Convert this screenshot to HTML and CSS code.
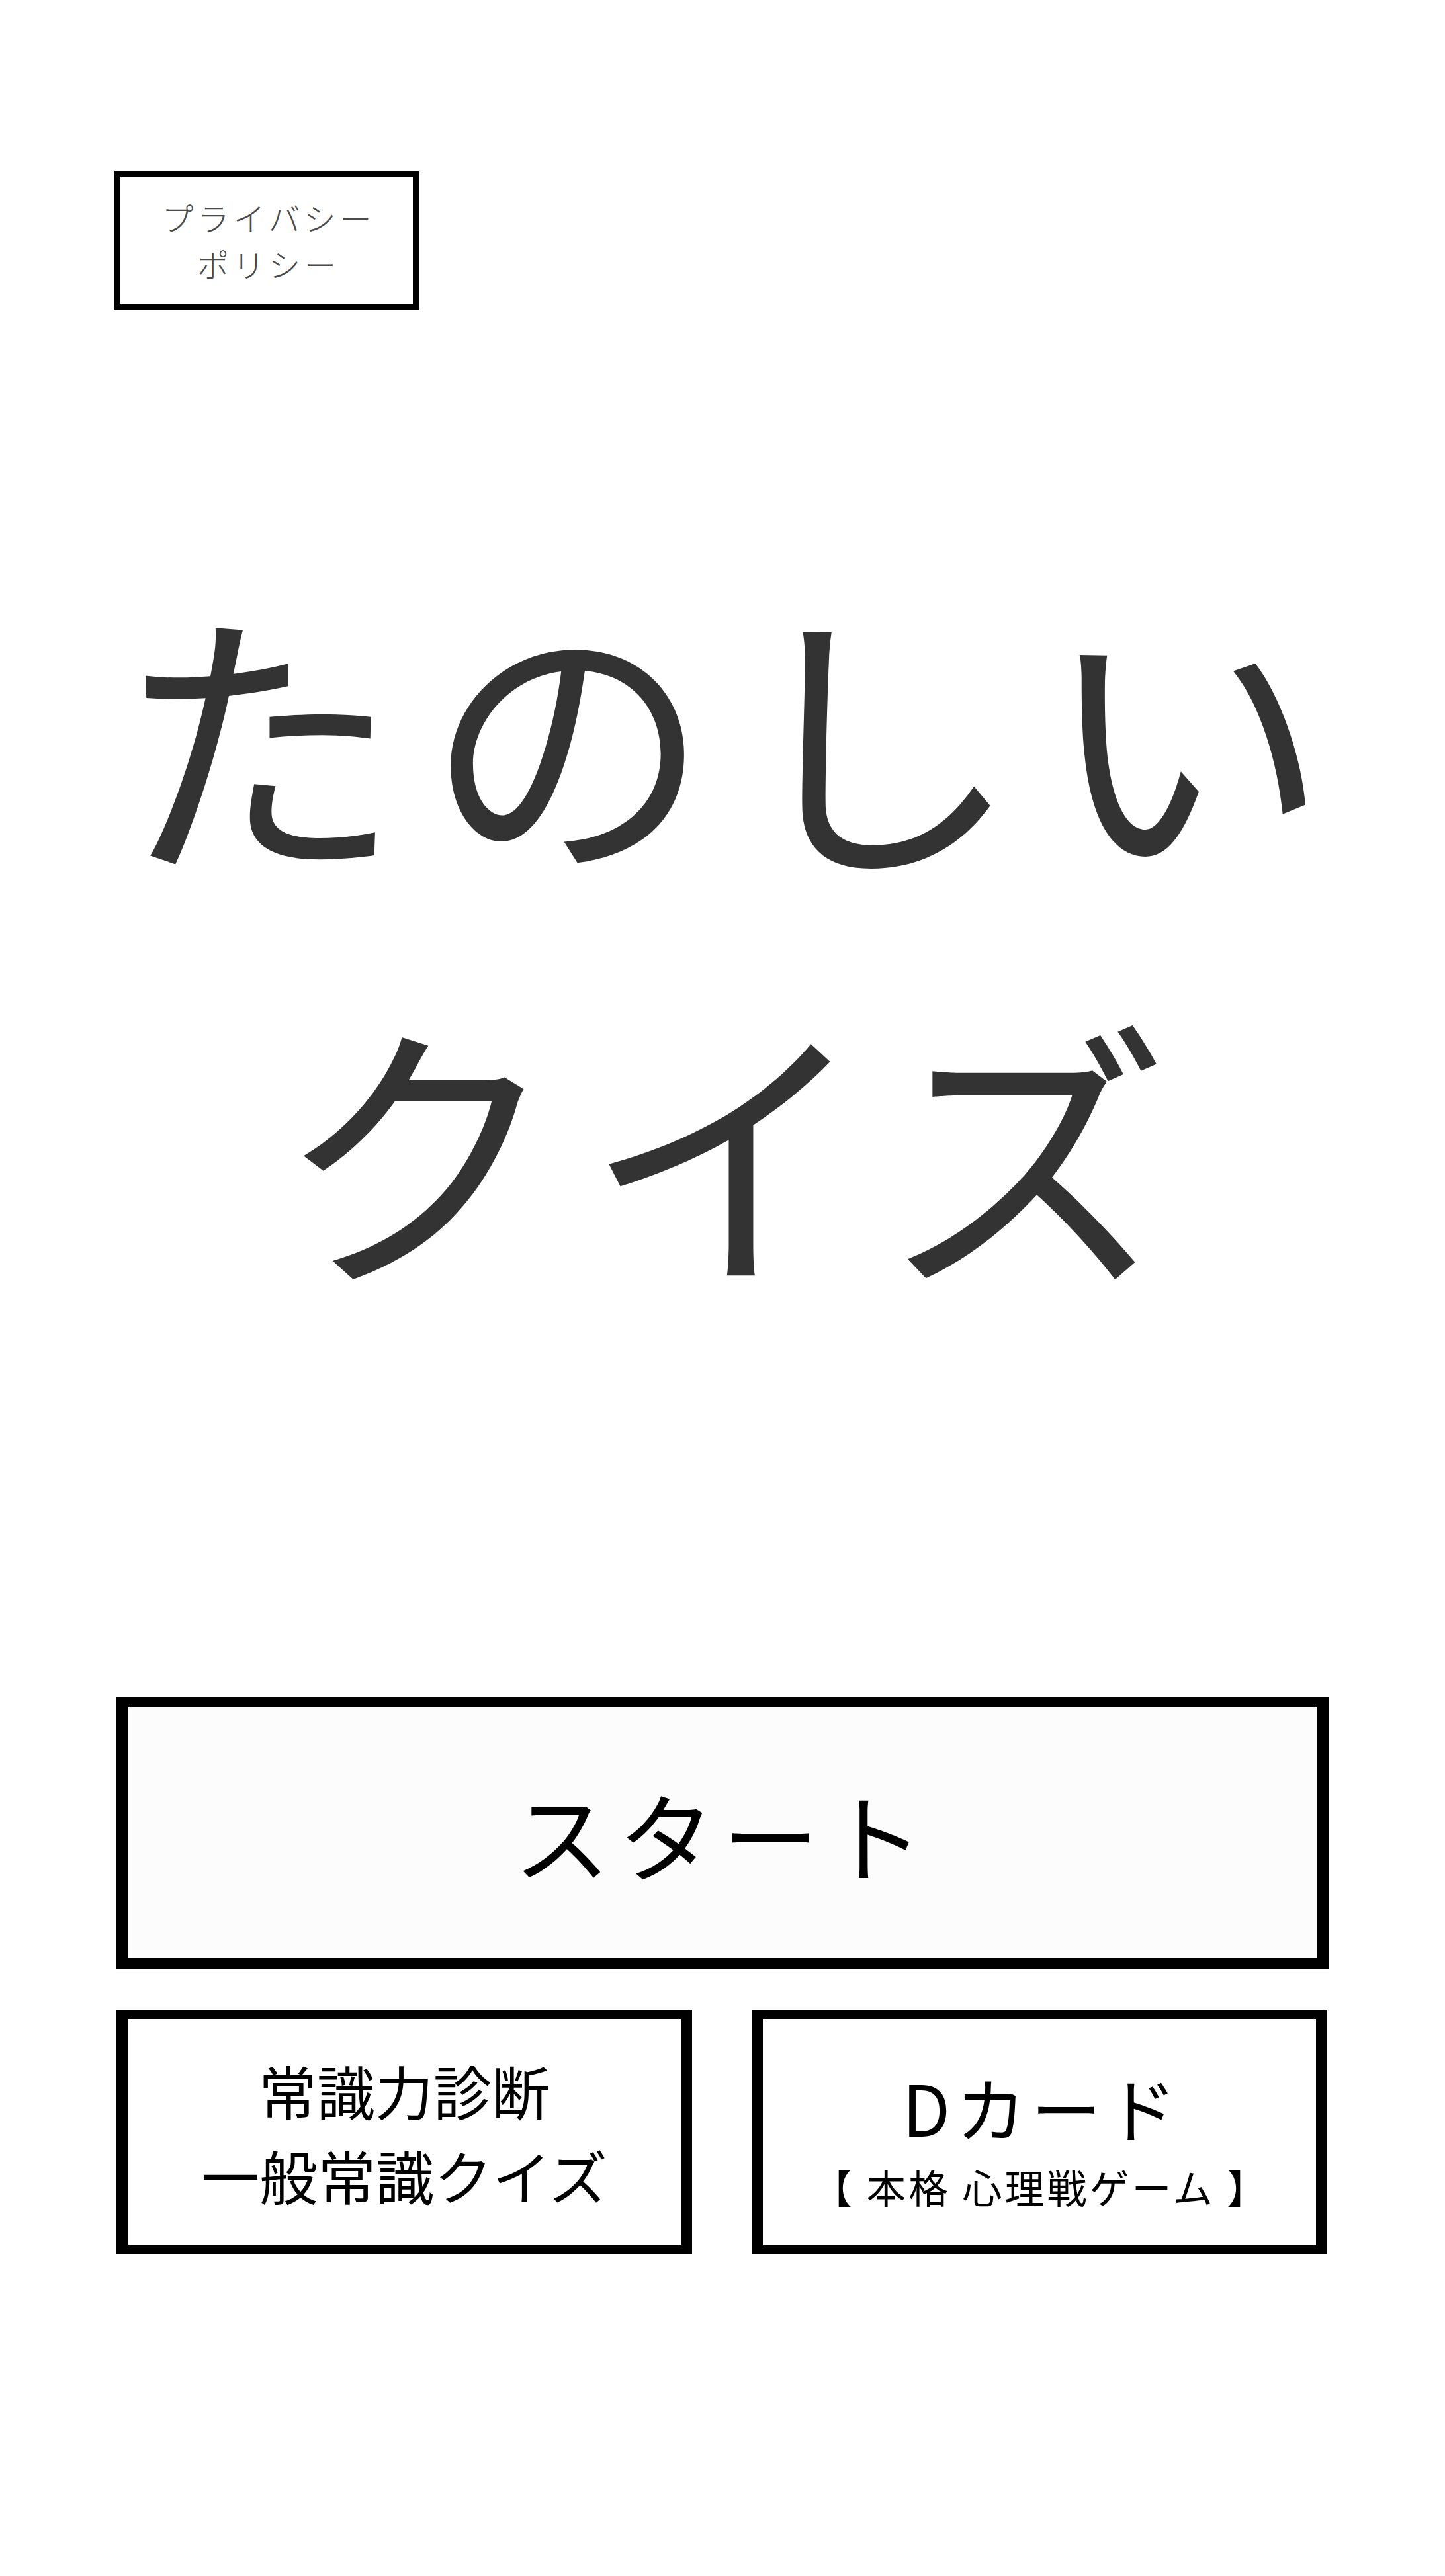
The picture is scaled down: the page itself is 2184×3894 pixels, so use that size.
FILE: index.html
```html
<!DOCTYPE html>
<html lang="ja">
<head>
<meta charset="utf-8">
<title>たのしいクイズ</title>
<link rel="stylesheet" href="styles.css">
</head>
<body>
<div class="page">
  <div class="privacy"><span>プライバシー</span><span>ポリシー</span></div>
  <h1 class="title"><span>たのしい</span><span>クイズ</span></h1>
  <div class="menu">
    <div class="btn start">スタート</div>
    <div class="row">
      <div class="btn small"><span class="l1">常識力診断</span><span class="l1">一般常識クイズ</span></div>
      <div class="btn small"><span class="dcard">Dカード</span><span class="sub">【 本格 心理戦ゲーム 】</span></div>
    </div>
  </div>
</div>
</body>
</html>
```

FILE: styles.css
```css
html, body {
  margin: 0;
  padding: 0;
  background: #ffffff;
}
body {
  width: 2184px;
  min-height: 3894px;
  font-family: "Noto Sans CJK JP", "Noto Sans", sans-serif;
}
.page {
  padding: 258px 0 0 0;
  display: flex;
  flex-direction: column;
}
.privacy {
  margin-left: 173px;
  width: 460px;
  height: 210px;
  box-sizing: border-box;
  border: 9px solid #000;
  display: flex;
  flex-direction: column;
  align-items: center;
  justify-content: center;
  font-size: 48px;
  line-height: 70px;
  color: #4a4a4a;
  font-weight: 300;
  letter-spacing: 6px;
  padding-left: 6px;
}
.title {
  margin: 324px 0 0 0;
  font-size: 430px;
  line-height: 624px;
  font-weight: 400;
  color: #333;
  text-align: center;
  display: flex;
  flex-direction: column;
  align-items: center;
  letter-spacing: 37px;
}
.title span {
  padding-left: 37px;
}
.menu {
  margin: 525px 0 0 176px;
  width: 1832px;
  display: flex;
  flex-direction: column;
  gap: 61px;
}
.btn {
  box-sizing: border-box;
  border-style: solid;
  border-color: #000;
  display: flex;
  flex-direction: column;
  align-items: center;
  justify-content: center;
  color: #000;
}
.start {
  height: 412px;
  border-width: 16px 17px 17px 17px;
  background: #fcfcfc;
  font-size: 146px;
  line-height: 212px;
  font-weight: 400;
  letter-spacing: 12px;
}
.row {
  display: flex;
  gap: 90px;
}
.small {
  width: 870px;
  height: 370px;
  border-width: 14px 17px;
  background: #fff;
}
.l1 {
  font-size: 88px;
  line-height: 128px;
  font-weight: 400;
}
.dcard {
  font-size: 106px;
  line-height: 154px;
  letter-spacing: 8px;
  padding-left: 8px;
  margin-top: 8px;
}
.sub {
  font-size: 60px;
  line-height: 87px;
  letter-spacing: 4px;
  padding-left: 4px;
}
```
